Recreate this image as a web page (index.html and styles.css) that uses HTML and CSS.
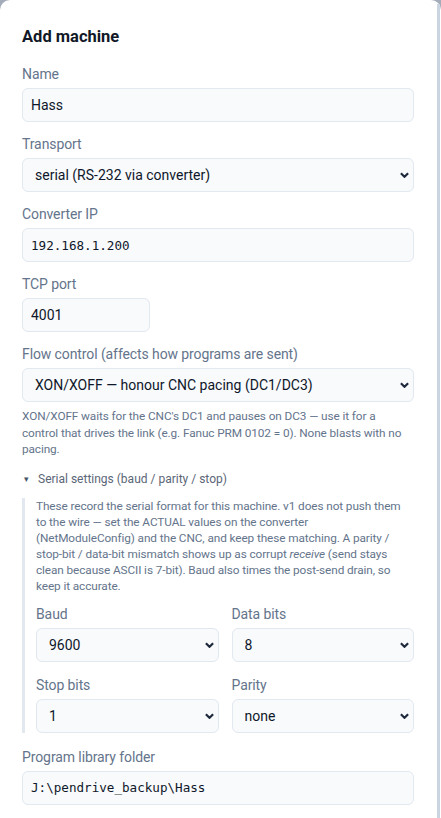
FILE: index.html
```html
<!DOCTYPE html>
<html lang="en">
<head>
  <meta charset="UTF-8" />
  <meta name="viewport" content="width=device-width, initial-scale=1.0" />
  <title>Add machine</title>
  <link rel="stylesheet" href="styles.css">
</head>
<body>
  <div class="modal">
    <h2 class="modal-title">Add machine</h2>

    <div class="field">
      <label for="m-name">Name</label>
      <input id="m-name" class="control" type="text" value="Hass" />
    </div>

    <div class="field">
      <label for="m-transport">Transport</label>
      <div class="select-wrap">
        <select id="m-transport" class="control">
          <option>serial (RS-232 via converter)</option>
          <option>tcp (raw socket)</option>
        </select>
        <svg class="chevron" viewBox="0 0 10 6"><path d="M1 1l4 4 4-4" /></svg>
      </div>
    </div>

    <div class="field">
      <label for="m-ip">Converter IP</label>
      <input id="m-ip" class="control mono" type="text" value="192.168.1.200" />
    </div>

    <div class="field">
      <label for="m-port">TCP port</label>
      <input id="m-port" class="control narrow" type="text" value="4001" />
    </div>

    <div class="field">
      <label for="m-flow">Flow control (affects how programs are sent)</label>
      <div class="select-wrap">
        <select id="m-flow" class="control">
          <option>XON/XOFF — honour CNC pacing (DC1/DC3)</option>
          <option>None — blast</option>
        </select>
        <svg class="chevron" viewBox="0 0 10 6"><path d="M1 1l4 4 4-4" /></svg>
      </div>
      <p class="hint flow-hint">XON/XOFF waits for the CNC's DC1 and pauses on DC3 — use it for a<br>control that drives the link (e.g. Fanuc PRM 0102 = 0). None blasts with no<br>pacing.</p>
    </div>

    <details class="serial" open>
      <summary>Serial settings (baud / parity / stop)</summary>
      <div class="serial-body">
        <p class="hint">These record the serial format for this machine. v1 does not push them<br>to the wire — set the ACTUAL values on the converter<br>(NetModuleConfig) and the CNC, and keep these matching. A parity /<br>stop-bit / data-bit mismatch shows up as corrupt <em>receive</em> (send stays<br>clean because ASCII is 7-bit). Baud also times the post-send drain, so<br>keep it accurate.</p>
        <div class="serial-grid">
          <div class="field">
            <label for="m-baud">Baud</label>
            <div class="select-wrap">
              <select id="m-baud" class="control">
                <option>9600</option><option>4800</option><option>19200</option>
              </select>
              <svg class="chevron" viewBox="0 0 10 6"><path d="M1 1l4 4 4-4" /></svg>
            </div>
          </div>
          <div class="field">
            <label for="m-data">Data bits</label>
            <div class="select-wrap">
              <select id="m-data" class="control">
                <option>8</option><option>7</option>
              </select>
              <svg class="chevron" viewBox="0 0 10 6"><path d="M1 1l4 4 4-4" /></svg>
            </div>
          </div>
          <div class="field">
            <label for="m-stop">Stop bits</label>
            <div class="select-wrap">
              <select id="m-stop" class="control">
                <option>1</option><option>2</option>
              </select>
              <svg class="chevron" viewBox="0 0 10 6"><path d="M1 1l4 4 4-4" /></svg>
            </div>
          </div>
          <div class="field">
            <label for="m-parity">Parity</label>
            <div class="select-wrap">
              <select id="m-parity" class="control">
                <option>none</option><option>even</option><option>odd</option>
              </select>
              <svg class="chevron" viewBox="0 0 10 6"><path d="M1 1l4 4 4-4" /></svg>
            </div>
          </div>
        </div>
      </div>
    </details>

    <div class="field">
      <label for="m-lib">Program library folder</label>
      <input id="m-lib" class="control mono" type="text" value="J:\pendrive_backup\Hass" />
    </div>
  </div>
  <div class="scroll-thumb"></div>
</body>
</html>
```

FILE: styles.css
```css
:root {
  --fg: #0f172a;
  --muted: #64748b;
  --line: #e2e8f0;
  --field-bg: #f8fafc;
}
* { box-sizing: border-box; margin: 0; padding: 0; }
html, body { height: 100%; background: #a3acb8; font-family: 'Roboto', 'Noto Sans', sans-serif; color: var(--fg); }
body { overflow: hidden; }

.modal { background: #fff; min-height: 100%; border-radius: 10px 10px 0 0; padding: 25px 27px 20px 22px; }
.modal-title { font-size: 16.5px; line-height: 24px; font-weight: 700; color: #111827; margin-bottom: 15px; }

.field { display: flex; flex-direction: column; margin-bottom: 12px; }
.field label { font-size: 14px; line-height: 20px; color: var(--muted); margin-bottom: 4px; letter-spacing: -0.1px; }

.control { width: 100%; height: 34px; border: 1px solid var(--line); border-radius: 6px; background: var(--field-bg); color: var(--fg); font-family: inherit; font-size: 14px; padding: 0 8px; outline: none; }
.control.mono { font-family: 'DejaVu Sans Mono', monospace; font-size: 12.6px; }
.control.narrow { width: 128px; }

.select-wrap { position: relative; }
select.control { appearance: none; -webkit-appearance: none; padding-left: 12px; }
.chevron { position: absolute; right: 5px; top: 14px; width: 9px; height: 6px; fill: none; stroke: #1e293b; stroke-width: 2.4; pointer-events: none; }

.hint { font-size: 11.8px; line-height: 16px; letter-spacing: -0.1px; color: var(--muted); white-space: nowrap; }
.flow-hint { margin-top: 6px; line-height: 16.5px; }

.serial { margin-top: 8px; margin-bottom: 14px; }
.serial summary { list-style: none; font-size: 12px; line-height: 18px; color: #5b6677; cursor: pointer; }
.serial summary::-webkit-details-marker { display: none; }
.serial summary::before { content: "\25BE"; display: inline-block; width: 14px; padding-left: 2px; font-size: 9px; color: #475569; vertical-align: 1px; }
.serial-body { margin-top: 10px; border-left: 3px solid var(--line); padding-left: 11px; }
.serial-body .hint { margin-bottom: 10px; }
.serial-grid { display: grid; grid-template-columns: 1fr 1fr; column-gap: 13px; }
.serial-grid .field { margin-bottom: 13px; }
.serial-grid .field:nth-last-child(-n+2) { margin-bottom: 0; }

.scroll-thumb { position: fixed; top: 4px; bottom: 0; right: 1px; width: 3px; background: #cbd5e1; }
```
